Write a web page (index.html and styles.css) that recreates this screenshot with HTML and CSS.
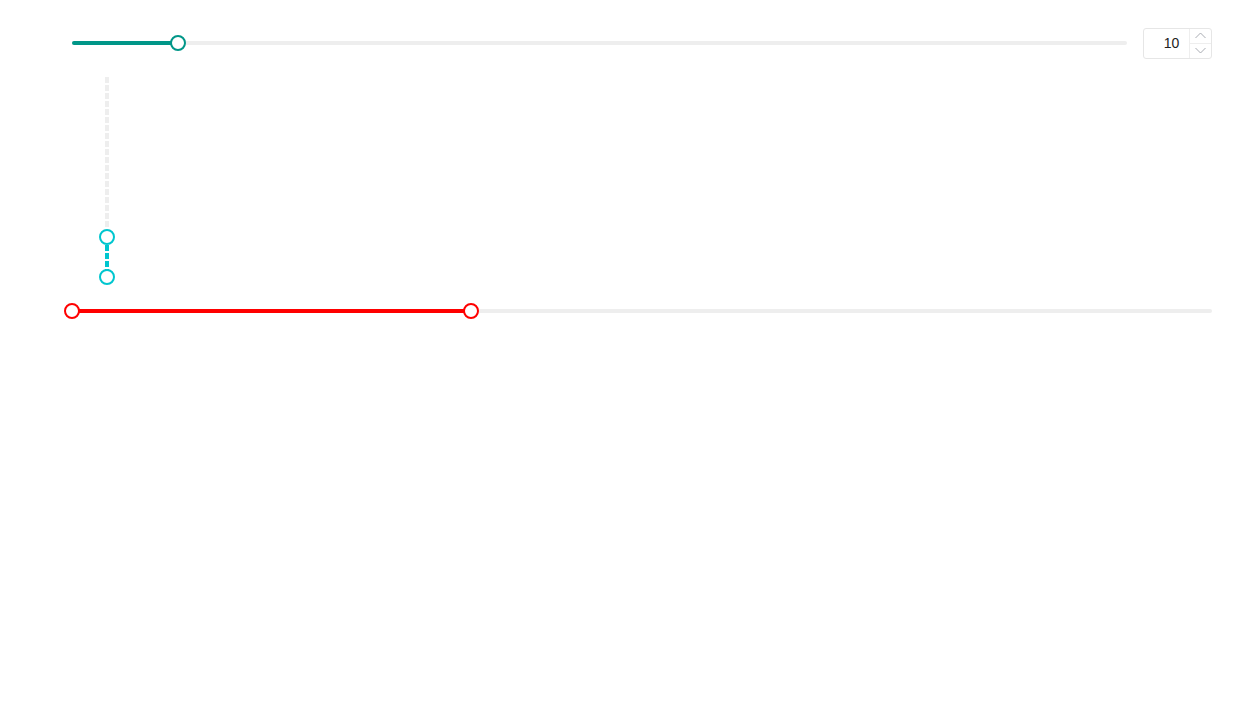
FILE: index.html
```html
<!DOCTYPE html>
<html>
<head>
<meta charset="utf-8">
<link rel="stylesheet" href="styles.css">
</head>
<body>
<div class="page">
  <div class="row-top">
    <div class="track track-h">
      <div class="fill fill-teal" style="width:10%"></div>
      <span class="handle handle-teal" style="left:10%"></span>
    </div>
    <div class="num">
      <span class="num-value">10</span>
      <div class="num-ctrl">
        <span class="num-btn"><svg width="11" height="7" viewBox="0 0 11 7"><path d="M0.5 6 L5.5 1 L10.5 6" fill="none" stroke="#a8abb2" stroke-width="1"/></svg></span>
        <span class="num-btn num-btn-down"><svg width="11" height="7" viewBox="0 0 11 7"><path d="M0.5 1 L5.5 6 L10.5 1" fill="none" stroke="#a8abb2" stroke-width="1"/></svg></span>
      </div>
    </div>
  </div>
  <div class="row-vert">
    <div class="track-v">
      <div class="fill-v" style="bottom:0;height:20%"></div>
      <span class="handle handle-cyan handle-v" style="bottom:20%"></span>
      <span class="handle handle-cyan handle-v" style="bottom:0"></span>
    </div>
  </div>
  <div class="row-red">
    <div class="track track-h">
      <div class="fill fill-red" style="width:35%"></div>
      <span class="handle handle-red" style="left:0"></span>
      <span class="handle handle-red" style="left:35%"></span>
    </div>
  </div>
</div>
</body>
</html>
```

FILE: styles.css
```css
html, body {
  margin: 0;
  padding: 0;
  background: #fff;
  font-family: "Liberation Sans", Arial, sans-serif;
}
.page {
  padding: 28px 37px 0 72px;
  min-height: 706px;
  box-sizing: border-box;
}
.row-top {
  display: flex;
  align-items: center;
  gap: 16px;
  height: 30px;
}
.track {
  position: relative;
  height: 4px;
  background: #eeeeee;
  border-radius: 2px;
}
.track-h {
  flex: 1;
}
.fill {
  height: 100%;
  border-radius: 2px;
}
.fill-teal { background: #009688; }
.fill-red { background: #ff0000; }
.handle {
  position: absolute;
  z-index: 1;
  box-sizing: border-box;
  width: 16px;
  height: 16px;
  border-radius: 50%;
  background: #fff;
  border: 2px solid;
  top: 50%;
  transform: translate(-50%, -50%);
}
.handle-teal { border-color: #009688; }
.handle-red { border-color: #ff0000; }
.handle-cyan { border-color: #00c6cf; }
.num {
  width: 69px;
  height: 31px;
  box-sizing: border-box;
  border: 1px solid #e6e6e6;
  border-radius: 3px;
  display: flex;
}
.num-value {
  flex: 1;
  display: flex;
  align-items: center;
  justify-content: center;
  padding-left: 10px;
  font-size: 14px;
  color: #222;
}
.num-ctrl {
  width: 21px;
  border-left: 1px solid #eeeeee;
  display: flex;
  flex-direction: column;
}
.num-btn {
  flex: 1;
  display: flex;
  align-items: center;
  justify-content: center;
}
.num-btn-down {
  border-top: 1px solid #eeeeee;
}
.row-vert {
  margin-top: 19px;
  padding-left: 33px;
  height: 200px;
}
.track-v {
  position: relative;
  width: 4px;
  height: 200px;
  background: repeating-linear-gradient(to bottom, #eeeeee 0 6px, transparent 6px 8px);
}
.fill-v {
  position: absolute;
  left: 0;
  width: 4px;
  background: repeating-linear-gradient(to bottom, #00c6cf 0 6px, transparent 6px 8px);
}
.handle-v {
  top: auto;
  left: 50%;
  transform: translate(-50%, 50%);
}
.row-red {
  margin-top: 32px;
}
```
